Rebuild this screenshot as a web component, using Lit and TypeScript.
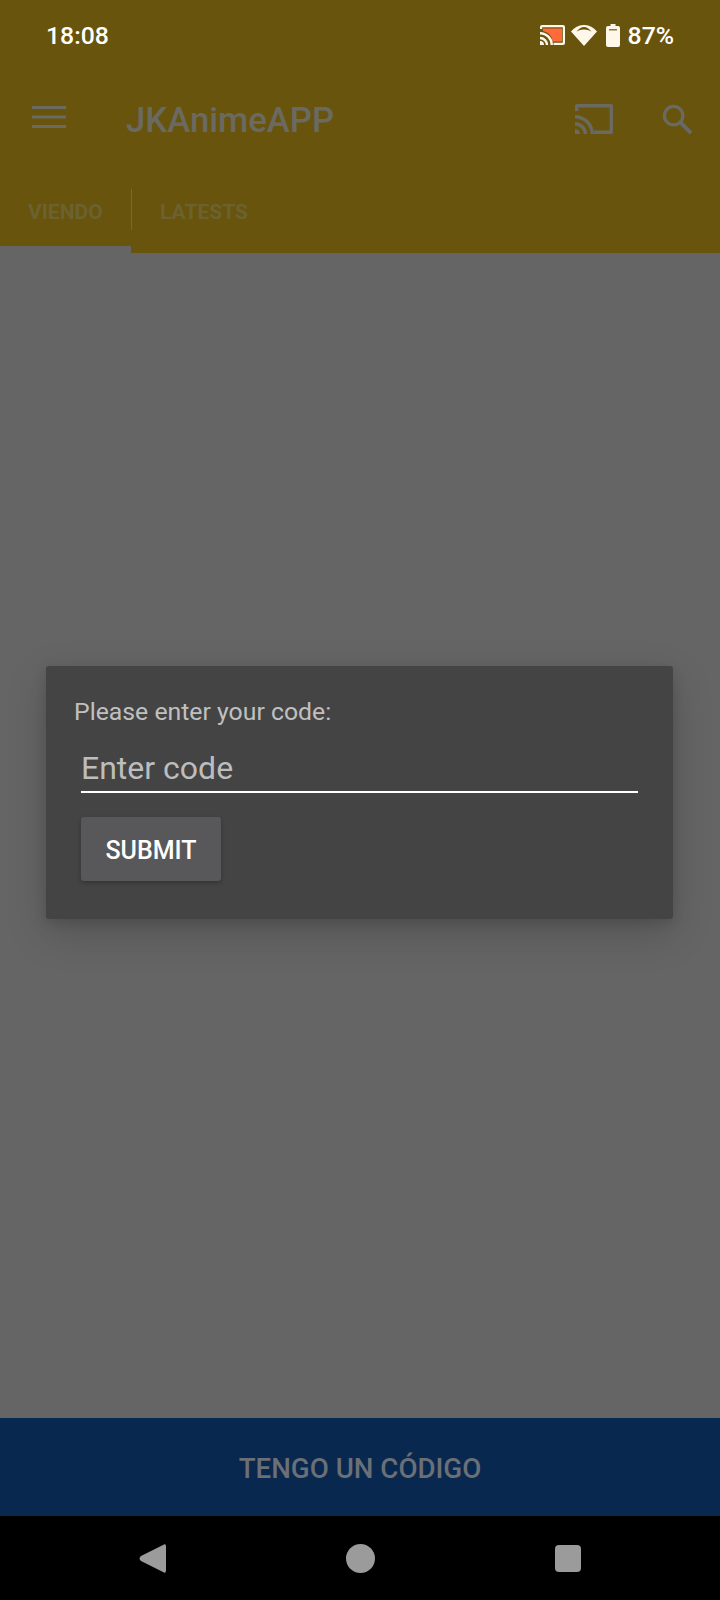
import { LitElement, css, html } from 'lit';
import { customElement } from 'lit/decorators.js';

@customElement('app-root')
export class AppRoot extends LitElement {
  static styles = css`
    :host {
      display: block;
      width: 720px;
      height: 1600px;
      font-family: Roboto, sans-serif;
      background: #656565;
    }
    .page {
      display: flex;
      flex-direction: column;
      height: 1600px;
    }
    .top {
      background: #68540c;
      height: 253px;
      flex: none;
    }
    .status {
      height: 72px;
      display: flex;
      align-items: center;
      padding: 0 46px 2px;
      box-sizing: border-box;
      color: #fff;
      font-size: 24.8px;
      font-weight: 500;
    }
    .time {
      flex: 1;
    }
    .status-icons {
      display: flex;
      align-items: center;
    }
    .pct {
      margin-left: 8px;
    }
    .cast-small {
      margin-right: 6px;
    }
    .wifi {
      margin-right: 9px;
    }
    .toolbar {
      height: 96px;
      display: flex;
      align-items: center;
      padding-left: 32px;
      padding-right: 27px;
    }
    .menu {
      margin-bottom: 6px;
    }
    .title {
      margin-left: 60px;
      flex: 1;
      color: #6a6a62;
      font-size: 34.7px;
      font-weight: 500;
    }
    .search {
      margin-left: 49px;
      margin-bottom: 2px;
    }
    .cast {
      margin-bottom: 2px;
    }
    .tabs {
      display: flex;
      height: 85px;
      color: #6b6230;
      font-size: 21px;
      line-height: 24px;
      font-weight: 700;
    }
    .tab {
      box-sizing: border-box;
      padding-top: 32px;
      height: 85px;
    }
    .tab.active {
      width: 131px;
      padding-left: 28px;
      border-bottom: 7px solid #656565;
    }
    .tab.other {
      padding-left: 28px;
    }
    .sep {
      width: 1px;
      height: 41px;
      margin-top: 21px;
      background: #7b6a2c;
    }
    .main {
      flex: 1;
      padding: 413px 47px 0 46px;
    }
    .dialog {
      background: #444444;
      border-radius: 3px;
      height: 253px;
      box-sizing: border-box;
      padding: 32px 35px 0 28px;
      box-shadow: 0 14px 40px rgba(0, 0, 0, 0.18), 0 4px 12px rgba(0, 0, 0, 0.12);
    }
    .label {
      color: #c0c0c0;
      font-size: 24.8px;
      line-height: 28px;
    }
    .field {
      margin: 19px 0 0 7px;
      height: 48px;
      box-sizing: border-box;
      border-bottom: 2px solid #ffffff;
      color: #bdbdbd;
      font-size: 32px;
      line-height: 46px;
    }
    .submit {
      display: flex;
      align-items: center;
      justify-content: center;
      margin: 24px 0 0 7px;
      width: 140px;
      height: 64px;
      padding-top: 2px;
      box-sizing: border-box;
      background: #58585a;
      border-radius: 3px;
      color: #fff;
      font-size: 25px;
      font-weight: 500;
      box-shadow: 0 2px 4px rgba(0, 0, 0, 0.25);
    }
    .cta {
      height: 98px;
      flex: none;
      background: #082850;
      color: #6b6f76;
      display: flex;
      align-items: center;
      justify-content: center;
      box-sizing: border-box;
      padding-top: 3px;
      font-size: 27.7px;
      font-weight: 500;
    }
    .nav {
      height: 84px;
      flex: none;
      background: #000;
      display: flex;
      align-items: flex-start;
      justify-content: center;
      gap: 180px;
      padding-top: 28px;
      box-sizing: border-box;
    }
    .nav-square {
      margin-top: 1px;
    }
    svg {
      display: block;
      flex: none;
    }
  `;

  render() {
    return html`
      <div class="page">
        <div class="top">
          <div class="status">
            <span class="time">18:08</span>
            <div class="status-icons">
              <svg class="cast-small" width="25" height="20" viewBox="0 0 25 20">
                <path d="M3 3.500h19v13h-9.500A11 11 0 0 0 3 6z" fill="#ff6a3a" />
                <path
                  d="M0 4V2Q0 0 2 0h21q2 0 2 2v16q0 2-2 2H13.500v-2.200h9.300V2.200H2.200V4z"
                  fill="#fff8ea"
                />
                <path
                  d="M0 7a13 13 0 0 1 13 13h-2.400A10.600 10.600 0 0 0 0 9.400zM0 11.800A8.200 8.200 0 0 1 8.200 20H5.800A5.800 5.800 0 0 0 0 14.200zM0 16a4 4 0 0 1 4 4H0z"
                  fill="#fff8ea"
                />
              </svg>
              <svg class="wifi" width="26" height="21" viewBox="0 0 26 21">
                <path d="M13 21 0 6.500C7.500-2.200 18.500-2.200 26 6.500z" fill="#fff8ea" />
                <path d="M5.500 6.800C10 .5 16 .5 20.500 6.800 16 3.800 10 3.800 5.500 6.800z" fill="#68540c" />
              </svg>
              <svg width="14" height="23" viewBox="0 0 14 23">
                <path d="M4.500 0h5v2H12q2 0 2 2v17q0 2-2 2H2q-2 0-2-2V4q0-2 2-2h2.500z" fill="#fff8ea" />
                <rect x="3" y="5" width="8" height="1.500" fill="#8a7a44" />
              </svg>
              <span class="pct">87%</span>
            </div>
          </div>
          <div class="toolbar">
            <svg class="menu" width="34" height="22" viewBox="0 0 34 22">
              <path d="M0 0h34v3H0zM0 9.500h34v3H0zM0 19h34v3H0z" fill="#6a6a62" />
            </svg>
            <span class="title">JKAnimeAPP</span>
            <svg class="cast" width="38" height="32" viewBox="1 2 38 30">
              <path d="M1 9V4q0-2 2-2h34q2 0 2 2v26q0 2-2 2H20v-3.400h15.600V5.400H4.400V9z" fill="#6a6a62" />
              <path
                d="M1 13a19 19 0 0 1 19 19h-3.400A15.600 15.600 0 0 0 1 16.400zM1 20a12 12 0 0 1 12 12H9.600A8.600 8.600 0 0 0 1 23.400zM1 27a5 5 0 0 1 5 5H1z"
                fill="#6a6a62"
              />
            </svg>
            <svg class="search" width="31" height="31" viewBox="0 0 32 32">
              <circle cx="12" cy="12" r="9.500" fill="none" stroke="#6a6a62" stroke-width="3.400" />
              <path d="M19 19 30 30" stroke="#6a6a62" stroke-width="4" fill="none" />
            </svg>
          </div>
          <div class="tabs">
            <div class="tab active">VIENDO</div>
            <div class="sep"></div>
            <div class="tab other">LATESTS</div>
          </div>
        </div>
        <div class="main">
          <div class="dialog">
            <div class="label">Please enter your code:</div>
            <div class="field">Enter code</div>
            <div class="submit">SUBMIT</div>
          </div>
        </div>
        <div class="cta">TENGO UN CÓDIGO</div>
        <div class="nav">
          <svg width="27" height="29" viewBox="0 0 27 29">
            <path d="M27 2.500V26.500Q27 29.800 24 28L2 17Q-1 14.500 2 12L24 1Q27-.8 27 2.500z" fill="#9b9b9b" />
          </svg>
          <svg width="29" height="29" viewBox="0 0 29 29">
            <circle cx="14.500" cy="14.500" r="14.500" fill="#9b9b9b" />
          </svg>
          <svg class="nav-square" width="26" height="27" viewBox="0 0 26 27">
            <rect width="26" height="27" rx="4" fill="#9b9b9b" />
          </svg>
        </div>
      </div>
    `;
  }
}
